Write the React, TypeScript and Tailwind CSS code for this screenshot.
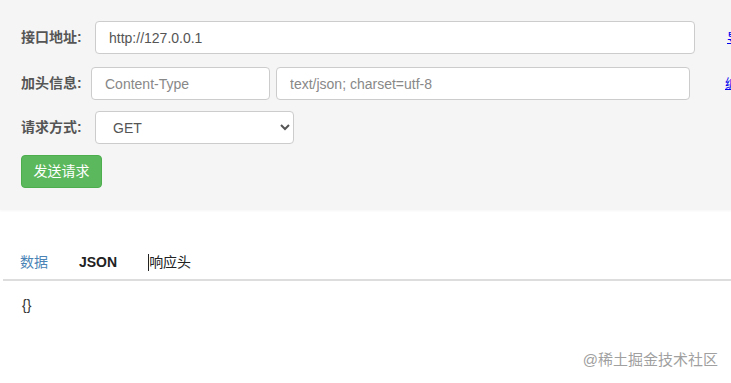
import React from "react";

const font = { fontFamily: '"Liberation Sans", Arial, "Noto Sans CJK SC", sans-serif' };

export default function App() {
  return (
    <div className="w-[731px] h-[383px] overflow-hidden bg-white text-[#333]" style={font}>
      <div className="bg-[#f5f5f5] h-[210px] pt-[21px] pl-[21px] shadow-[0_1px_2px_rgba(0,0,0,0.04)] overflow-hidden">
        <div className="flex items-center h-[33px] whitespace-nowrap">
          <span className="w-[74px] shrink-0 text-[14px] font-bold text-[#555]">接口地址:</span>
          <input
            className="w-[600px] shrink-0 h-[33px] border border-[#ccc] rounded-[4px] bg-white px-[13px] text-[14px] text-[#555] outline-none"
            defaultValue="http://127.0.0.1"
          />
          <a className="ml-[32px] text-[13px] text-[#0000ee] underline shrink-0">导入</a>
        </div>
        <div className="flex items-center h-[33px] mt-[13px] whitespace-nowrap">
          <span className="w-[70px] shrink-0 text-[14px] font-bold text-[#555]">加头信息:</span>
          <input
            className="w-[179px] shrink-0 h-[33px] border border-[#ccc] rounded-[4px] bg-white px-[13px] text-[14px] text-[#555] outline-none placeholder:text-[#888]"
            placeholder="Content-Type"
          />
          <input
            className="ml-[6px] w-[414px] shrink-0 h-[33px] border border-[#ccc] rounded-[4px] bg-white px-[13px] text-[14px] text-[#555] outline-none placeholder:text-[#888]"
            placeholder="text/json; charset=utf-8"
          />
          <a className="ml-[35px] text-[13px] text-[#0000ee] underline shrink-0">编辑</a>
        </div>
        <div className="flex items-center h-[33px] mt-[11px] whitespace-nowrap">
          <span className="w-[74px] shrink-0 text-[14px] font-bold text-[#555]">请求方式:</span>
          <select className="w-[199px] h-[33px] border border-[#ccc] rounded-[4px] bg-white pl-[13px] pr-[4px] text-[14px] text-[#555] outline-none">
            <option>GET</option>
            <option>POST</option>
          </select>
        </div>
        <div className="mt-[11px]">
          <button className="w-[81px] h-[33px] rounded-[4px] bg-[#5cb85c] border border-[#4cae4c] text-white text-[14px]">
            发送请求
          </button>
        </div>
      </div>
      <div className="pt-[44px] pl-[3px]">
        <div className="flex items-end h-[27px] border-b-2 border-[#ddd] text-[14px]">
          <div className="pl-[17px] pr-[31px] pb-[6px] text-[#4a84b6]">数据</div>
          <div className="pr-[31px] pb-[6px] font-bold text-[#222]">JSON</div>
          <div className="pb-[6px] text-[#222] flex items-center">
            <span className="inline-block w-[1px] h-[17px] bg-[#222]"></span>
            <span>响应头</span>
          </div>
        </div>
        <div className="pl-[19px] pt-[14px] text-[14px] text-[#333]">
          {"{}"}
        </div>
      </div>
      <div className="flex justify-end pr-[13px] mt-[33px] text-[15px] text-[#a0a0a0]">
        @稀土掘金技术社区
      </div>
    </div>
  );
}
